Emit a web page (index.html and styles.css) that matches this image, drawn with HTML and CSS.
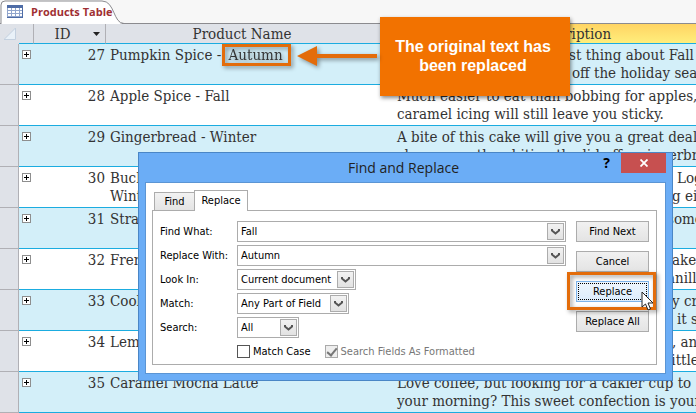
FILE: index.html
```html
<!DOCTYPE html>
<html lang="en">
<head>
<meta charset="utf-8">
<title>Products Table</title>
<link rel="stylesheet" href="styles.css">
</head>
<body>
<nav class="tabs">
  <a class="doc-tab" href="#products">
    <svg class="tab-shape" width="124" height="24" viewBox="0 0 124 24" aria-hidden="true"><path d="M1 24V5Q1 1 5 1H102C115 1 113 23.500 122 23.500V24Z" fill="#fff"/><path d="M1 24V5Q1 1 5 1H102C115 1 113 23.500 124 23.500" fill="none" stroke="#8b8b8f"/></svg>
    <svg width="16" height="14" viewBox="0 0 16 14" aria-hidden="true"><path fill="#fff" d="M0 0h16v13H0z"/><path fill="#4e6ca6" d="M0 0h16v3H0z"/><path d="M.5 3v10M4.500 3v10M8.500 3v10M12.500 3v10M15.500 3v10M0 5.500h16M0 8.500h16M0 11.500h16" stroke="#91a5cc"/><path d="M0 12.500h16M15.500 3v10" stroke="#4e6ca6"/></svg>
    <span>Products Table</span>
  </a>
</nav>
<main id="products">
<table class="sheet">
  <colgroup><col class="c-sel"><col class="c-exp"><col class="c-id"><col class="c-name"><col class="c-desc"></colgroup>
  <thead><tr>
    <th class="corner"><svg width="12" height="12" viewBox="0 0 12 12" aria-hidden="true"><path d="M11.500 0v11.500H0z" fill="#e9f1f8" stroke="#c3d0df"/></svg></th>
    <th></th>
    <th><div class="head"><span>ID</span><svg width="7" height="4" viewBox="0 0 7 4" aria-hidden="true"><path d="M0 0h7L3.500 4z" fill="#222"/></svg></div></th>
    <th><div class="head"><span>Product Name</span></div></th>
    <th class="active"><div class="head"><span>Description</span></div></th>
  </tr></thead>
  <tbody>
    <tr><td></td><td><button class="plus" aria-label="Expand 27"></button></td><td>27</td><td>Pumpkin Spice - <span class="marked">Autumn</span></td><td><span class="line off-a">st thing about Fall</span><span class="line off-b">off the holiday season</span></td></tr>
    <tr><td></td><td><button class="plus" aria-label="Expand 28"></button></td><td>28</td><td>Apple Spice - Fall</td><td><span class="line">Much easier to eat than bobbing for apples,</span><span class="line">caramel icing will still leave you sticky.</span></td></tr>
    <tr><td></td><td><button class="plus" aria-label="Expand 29"></button></td><td>29</td><td>Gingerbread - Winter</td><td><span class="line">A bite of this cake will give you a great deal</span><span class="line">chew more than biting the lid off a gingerbread</span></td></tr>
    <tr><td></td><td><button class="plus" aria-label="Expand 30"></button></td><td>30</td><td><span class="line">Buche de Noel -</span><span class="line">Winter</span></td><td><span class="line off-d">Log</span><span class="line off-c">g either</span></td></tr>
    <tr><td></td><td><button class="plus" aria-label="Expand 31"></button></td><td>31</td><td>Strawberry</td><td><span class="line off-e">some</span></td></tr>
    <tr><td></td><td><button class="plus" aria-label="Expand 32"></button></td><td>32</td><td>French Vanilla</td><td><span class="line off-c">ake</span><span class="line off-e">anilla</span></td></tr>
    <tr><td></td><td><button class="plus" aria-label="Expand 33"></button></td><td>33</td><td>Cookies</td><td><span class="line off-c">y cream</span><span class="line off-d">it so</span></td></tr>
    <tr><td></td><td><button class="plus" aria-label="Expand 34"></button></td><td>34</td><td>Lemon</td><td><span class="line off-c">, and</span><span class="line off-e">little</span></td></tr>
    <tr><td></td><td><button class="plus" aria-label="Expand 35"></button></td><td>35</td><td>Caramel Mocha Latte</td><td><span class="line">Love coffee, but looking for a cakier cup to</span><span class="line">your morning? This sweet confection is your</span></td></tr>
  </tbody>
</table>
</main>

<aside class="callout">The original text has been replaced</aside>
<svg class="arrow" width="84" height="24" viewBox="0 0 84 24" aria-hidden="true"><path d="M0 11 20 1v8h60v4H20v8z" fill="#e36c0a"/></svg>

<section class="dialog" role="dialog" aria-labelledby="dlg-title">
  <header class="titlebar">
    <h1 id="dlg-title">Find and Replace</h1>
    <div class="window-buttons">
      <button class="help" aria-label="Help">?</button>
      <button class="close" aria-label="Close"><svg width="8" height="8" viewBox="0 0 8 8" aria-hidden="true"><path d="M.5.5l7 7M7.500.5l-7 7" stroke="#fff" stroke-width="1.800"/></svg></button>
    </div>
  </header>
  <form class="content">
    <div class="dlg-tabs"><button type="button">Find</button><button type="button" class="current">Replace</button></div>
    <div class="panel">
      <div class="fields">
        <label for="what">Find What:</label>
        <div class="combo wide"><input id="what" value="Fall"><button type="button" class="drop" aria-label="Previous searches"><svg width="9" height="7" viewBox="0 0 9 7"><path d="M1 1v1.500l3.500 3L8 2.500V1" /></svg></button></div>
        <label for="with">Replace With:</label>
        <div class="combo wide"><input id="with" value="Autumn"><button type="button" class="drop" aria-label="Previous replacements"><svg width="9" height="7" viewBox="0 0 9 7"><path d="M1 1v1.500l3.500 3L8 2.500V1" /></svg></button></div>
        <label for="look">Look In:</label>
        <div class="combo look"><select id="look"><option>Current document</option></select><span class="drop"><svg width="9" height="7" viewBox="0 0 9 7"><path d="M1 1v1.500l3.500 3L8 2.500V1" /></svg></span></div>
        <label for="match">Match:</label>
        <div class="combo match"><select id="match"><option>Any Part of Field</option></select><span class="drop"><svg width="9" height="7" viewBox="0 0 9 7"><path d="M1 1v1.500l3.500 3L8 2.500V1" /></svg></span></div>
        <label for="search">Search:</label>
        <div class="combo search"><select id="search"><option>All</option></select><span class="drop"><svg width="9" height="7" viewBox="0 0 9 7"><path d="M1 1v1.500l3.500 3L8 2.500V1" /></svg></span></div>
        <div class="checks">
          <label><input type="checkbox">Match Case</label>
          <label class="disabled"><input type="checkbox" checked disabled>Search Fields As Formatted</label>
        </div>
      </div>
      <div class="actions">
        <button type="button">Find Next</button>
        <button type="button">Cancel</button>
        <button type="button" class="default">Replace<svg class="cursor" width="13" height="20" viewBox="0 0 13 20" aria-hidden="true"><path d="M1 1v15l3.500-3 2.500 6 2.500-1L7 12h5z" fill="#fff" stroke="#222"/></svg></button>
        <button type="button">Replace All</button>
      </div>
    </div>
  </form>
</section>
</body>
</html>
```
FILE: styles.css
```css
* { box-sizing: border-box; }
body {
  margin: 0;
  min-height: 100vh;
  position: relative;
  overflow: hidden;
  background: #fff;
  color: #333;
  font: 15px/18px "DejaVu Serif Condensed", "DejaVu Serif", serif;
}
button, input, select { font: inherit; color: inherit; margin: 0; padding: 0; }

/* document tab strip */
.tabs { height: 24px; background: #f7f7f7; border-bottom: 1px solid #8b8b8f; }
.doc-tab {
  position: relative;
  display: inline-flex;
  align-items: center;
  gap: 8px;
  height: 24px;
  padding-left: 7px;
  color: #9f2f33;
  font: bold 11px/24px "Open Sans", sans-serif;
  text-decoration: none;
}
.doc-tab > * { position: relative; }
.doc-tab .tab-shape { position: absolute; left: 0; top: 0; }

/* datasheet */
#products { overflow: hidden; }
.sheet { width: 765px; table-layout: fixed; border-collapse: separate; border-spacing: 0; }
.c-sel { width: 19px; }
.c-exp { width: 15px; }
.c-id { width: 72px; }
.c-name { width: 287px; }
.sheet th {
  height: 20px;
  padding: 0;
  background: #dfe2e8;
  border-bottom: 1px solid #1bace0;
  border-right: 1px solid #b0b0b5;
  font-weight: normal;
}
.sheet th.corner { border-right: 0; border-bottom-color: #dfe2e8; }
.corner svg { display: block; margin-left: 4px; }
.sheet th.active { background: linear-gradient(#ffd463, #ffee7c); }
.head { display: flex; align-items: center; padding-right: 5px; }
.head span { flex: 1; padding-right: 2px; }
.head span:only-child { padding-right: 9px; }
.sheet td { height: 41px; padding: 2px 4px; border-bottom: 1px solid #1bace0; vertical-align: top; white-space: nowrap; overflow: hidden; }
.sheet tbody tr:nth-child(odd) { background: #d3eff9; }
.sheet td:first-child { background: #dfe2e8; border-right: 1px solid #b0b0b5; border-bottom-color: #b0b0b5; }
.sheet td:nth-child(2) { padding-left: 3px; }
.sheet td:nth-child(3) { text-align: right; padding-right: 1px; }
.line { display: block; }
.off-a { margin-left: 172px; }
.off-b { margin-left: 175px; }
.off-c { margin-left: 275px; }
.off-d { margin-left: 280px; }
.off-e { margin-left: 270px; }
.plus {
  display: block;
  width: 9px;
  height: 9px;
  margin-top: 4px;
  border: 1px solid #8e8e8e;
  background: linear-gradient(#000, #000) center / 5px 1px no-repeat, linear-gradient(#000, #000) center / 1px 5px no-repeat, #fff;
}
.marked { display: inline-block; padding: 0 5px 0 4px; margin-left: -1px; line-height: 16px; outline: 3px solid #e36c0a; filter: drop-shadow(2px 2px 2px #0006); }

/* annotations */
.callout {
  position: absolute;
  left: 380px;
  top: 17px;
  width: 190px;
  padding: 20px 14px 21px 10px;
  background: #f27200;
  box-shadow: 1px 2px 4px #0007;
  color: #fff;
  font: bold 16px/19px "Liberation Sans", sans-serif;
  text-align: center;
}
.arrow { position: absolute; left: 297px; top: 45px; filter: drop-shadow(2px 2px 2px #0006); }

/* dialog */
.dialog {
  position: absolute;
  left: 138px;
  top: 152px;
  width: 535px;
  padding: 0 6px 6px;
  background: #6badf6;
  border: 1px solid #4a86c6;
  color: #000;
  font: 11px/18px "DejaVu Sans Condensed", "DejaVu Sans", sans-serif;
}
.titlebar { position: relative; height: 29px; }
.titlebar h1 { margin: 0; padding-right: 4px; font: 14px/30px "Open Sans", sans-serif; color: #222; text-align: center; }
.window-buttons { position: absolute; right: 0; top: 0; display: flex; }
.window-buttons button { border: 0; height: 20px; display: grid; place-items: center; }
.help { width: 29px; background: none; font: bold 14px/20px "Open Sans", sans-serif; }
.close { width: 45px; background: #c75050; }
.content { border: 1px solid #5b95d4; background: #fff; padding: 7px 8px 8px 6px; }
.dlg-tabs { display: flex; align-items: flex-end; height: 20px; padding-left: 2px; }
.dlg-tabs button { width: 41px; height: 18px; border: 1px solid #acacac; border-bottom: 0; background: linear-gradient(#f2f2f2, #e4e4e4); }
.dlg-tabs .current { position: relative; width: 54px; height: 21px; margin: 0 0 -1px -1px; background: #fff; }
.panel { display: flex; justify-content: space-between; border: 1px solid #acacac; padding: 10px 7px 8px; height: 155px; }
.fields { display: grid; grid-template-columns: 77px 329px; grid-auto-rows: 21px; row-gap: 3px; align-items: center; }
.combo { position: relative; display: flex; height: 21px; border: 1px solid #acacac; background: #fff; padding: 1px; }
.combo input, .combo select { flex: 1; min-width: 0; border: 0; padding: 0 2px; background: none; appearance: none; outline: 0; }
.look { width: 119px; }
.match { width: 112px; }
.search { width: 62px; }
.drop { width: 17px; height: 17px; border: 1px solid #acacac; background: linear-gradient(#f2f2f2, #e2e2e2); display: grid; place-items: center; }
span.drop { position: absolute; right: 1px; top: 1px; pointer-events: none; }
.drop path { fill: none; stroke: #555; stroke-width: 2; }
.checks { grid-column: 2; display: flex; gap: 14px; }
.checks label { display: flex; align-items: center; gap: 3px; }
.checks input { appearance: none; width: 13px; height: 13px; border: 1px solid #555; background: #fff; }
.disabled { color: #777; }
.checks .disabled input { border-color: #aaa; background: #eee; }
.disabled input::after { content: ""; display: block; width: 4px; height: 8px; margin: 0 0 0 3px; border: solid #777; border-width: 0 2px 2px 0; transform: rotate(40deg); }
.actions { display: flex; flex-direction: column; gap: 9px; }
.actions button { width: 73px; height: 21px; border: 1px solid #acacac; background: linear-gradient(#f1f1f1, #e4e4e4); }
.actions .default { position: relative; border-color: #7eb4ea; background: linear-gradient(#eef6fd, #dcecfc); }
.actions .default::before { content: ""; position: absolute; inset: 1px; border: 1px dotted #000; }
.actions .default::after { content: ""; position: absolute; inset: -10px -8px -9px -10px; border: 3px solid #e36c0a; filter: drop-shadow(2px 2px 2px #0006); }
.cursor { position: absolute; z-index: 1; left: 64px; top: 9px; }
```
